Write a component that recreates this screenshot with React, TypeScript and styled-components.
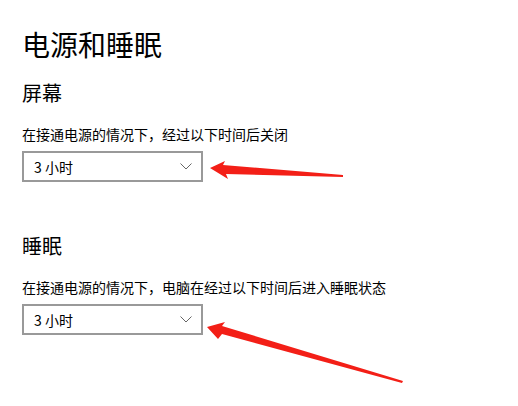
import React from "react";
import styled, { createGlobalStyle } from "styled-components";

const Global = createGlobalStyle`
  html, body { margin: 0; padding: 0; background: #fff; }
  body { font-family: "Noto Sans CJK SC", "Noto Sans", sans-serif; color: #000; }
`;

const Page = styled.div`
  position: relative;
  width: 518px;
  height: 406px;
  box-sizing: border-box;
  padding: 30px 0 0 22px;
  display: flex;
  flex-direction: column;
  overflow: hidden;
`;

const Title = styled.h1`
  margin: 0;
  font-size: 28px;
  line-height: 28px;
  font-weight: 400;
`;

const Section = styled.section<{ $top: number }>`
  display: flex;
  flex-direction: column;
  margin-top: ${(p) => p.$top}px;
`;

const Heading = styled.h2`
  margin: 0;
  font-size: 20px;
  line-height: 20px;
  font-weight: 400;
`;

const Label = styled.div`
  margin-top: 24px;
  font-size: 14px;
  line-height: 14px;
`;

const Select = styled.div`
  margin-top: 10px;
  width: 181px;
  height: 31px;
  box-sizing: border-box;
  border: 2px solid #999;
  display: flex;
  align-items: center;
  justify-content: space-between;
  padding: 0 9px 0 10px;
  font-size: 14px;
`;

const Value = styled.span`
  line-height: 14px;
`;

const Overlay = styled.svg`
  position: absolute;
  left: 0;
  top: 0;
  pointer-events: none;
`;

const Chevron = () => (
  <svg width="12" height="7" viewBox="0 0 12 7">
    <path d="M0.5 0.5 L6 6 L11.5 0.5" fill="none" stroke="#666" strokeWidth="1" />
  </svg>
);

const Dropdown = ({ value }: { value: string }) => (
  <Select>
    <Value>{value}</Value>
    <Chevron />
  </Select>
);

export default function App() {
  return (
    <>
      <Global />
      <Page>
        <Title>电源和睡眠</Title>
        <Section $top={25}>
          <Heading>屏幕</Heading>
          <Label>在接通电源的情况下，经过以下时间后关闭</Label>
          <Dropdown value="3 小时" />
        </Section>
        <Section $top={54}>
          <Heading>睡眠</Heading>
          <Label>在接通电源的情况下，电脑在经过以下时间后进入睡眠状态</Label>
          <Dropdown value="3 小时" />
        </Section>
        <Overlay width="518" height="406" viewBox="0 0 518 406">
          <polygon
            points="210,168 225,161 223,165 343,175 343,177 226,174 228,179"
            fill="#f31f17"
          />
          <polygon
            points="207,327 225,322 222,326 403,381 402,383 222,334 218,339"
            fill="#f31f17"
          />
        </Overlay>
      </Page>
    </>
  );
}
